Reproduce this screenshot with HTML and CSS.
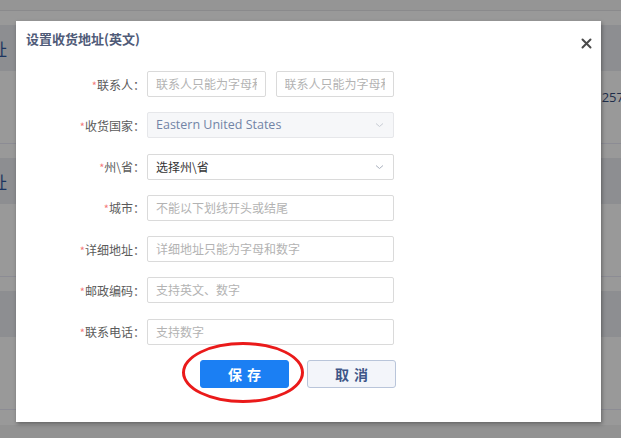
FILE: index.html
```html
<!DOCTYPE html>
<html lang="zh">
<head>
<meta charset="utf-8">
<link rel="stylesheet" href="styles.css">
</head>
<body>
<div class="page">
  <div class="topbar"></div>
  <div class="group">
    <div class="gap"></div>
    <div class="ghead"><span class="cut">址</span></div>
    <div class="grow"><span class="num">257</span></div>
  </div>
  <div class="group">
    <div class="gap"></div>
    <div class="ghead"><span class="cut">址</span></div>
    <div class="grow"></div>
  </div>
  <div class="group">
    <div class="gap"></div>
    <div class="ghead"></div>
    <div class="grow"></div>
  </div>
  <div class="foot"></div>
</div>

<div class="modal">
  <div class="mhead">
    <span class="mtitle">设置收货地址(英文)</span>
    <svg class="close" width="11" height="11" viewBox="0 0 11 11"><path d="M1.5 1.5L9.5 9.5M9.5 1.5L1.5 9.5" stroke="#4a4a4a" stroke-width="2" stroke-linecap="round"/></svg>
  </div>
  <div class="form">
    <label class="lbl"><i>*</i>联系人：</label>
    <div class="pair">
      <div class="inp ph"><span class="txt">联系人只能为字母和</span></div>
      <div class="inp ph"><span class="txt">联系人只能为字母和</span></div>
    </div>

    <label class="lbl"><i>*</i>收货国家：</label>
    <div class="inp sel disabled"><span>Eastern United States</span><svg class="chev" width="9" height="6" viewBox="0 0 9 6"><path d="M1 1.5L4.5 4.5L8 1.5" fill="none" stroke="#c8ccd4" stroke-width="1"/></svg></div>

    <label class="lbl"><i>*</i>州\省：</label>
    <div class="inp sel"><span>选择州\省</span><svg class="chev" width="9" height="6" viewBox="0 0 9 6"><path d="M1 1.5L4.5 4.5L8 1.5" fill="none" stroke="#a9b0bd" stroke-width="1"/></svg></div>

    <label class="lbl"><i>*</i>城市：</label>
    <div class="inp ph"><span class="txt">不能以下划线开头或结尾</span></div>

    <label class="lbl"><i>*</i>详细地址：</label>
    <div class="inp ph"><span class="txt">详细地址只能为字母和数字</span></div>

    <label class="lbl"><i>*</i>邮政编码：</label>
    <div class="inp ph"><span class="txt">支持英文、数字</span></div>

    <label class="lbl"><i>*</i>联系电话：</label>
    <div class="inp ph"><span class="txt">支持数字</span></div>
  </div>
  <div class="actions">
    <div class="savewrap">
      <button class="btn save">保存</button>
      <span class="ring"></span>
    </div>
    <button class="btn cancel">取消</button>
  </div>
</div>
</body>
</html>
```

FILE: styles.css
```css
* { box-sizing: border-box; }
html, body { margin: 0; padding: 0; }
body {
  width: 621px;
  height: 438px;
  overflow: hidden;
  background: #999999;
  font-family: "Noto Sans CJK SC", "Noto Sans", sans-serif;
  position: relative;
}
.page { display: flex; flex-direction: column; }
.topbar { height: 11px; background: #959595; border-bottom: 1px solid #8a8a8c; }
.group { display: flex; flex-direction: column; }
.gap { height: 14px; background: #999999; }
.ghead {
  height: 46px;
  background: #8d8e91;
  display: flex;
  align-items: center;
  overflow: hidden;
}
.cut {
  font-size: 17px;
  color: #1c3560;
  margin-left: -10px;
}
.grow {
  height: 73px;
  background: #999999;
  border-bottom: 1px solid #8c8c94;
  display: flex;
  align-items: center;
  justify-content: flex-end;
  padding-bottom: 20px;
}
.num {
  font-family: "Open Sans", sans-serif;
  font-size: 13px;
  color: #1f2d4a;
  margin-right: -3px;
}
.foot { height: 28px; background: linear-gradient(#999 0 15px, #929292 15px); }

.modal {
  position: absolute;
  left: 16px;
  top: 21px;
  width: 585px;
  height: 401px;
  background: #ffffff;
  box-shadow: 1px 2px 4px rgba(0,0,0,0.35);
  display: flex;
  flex-direction: column;
}
.mhead {
  height: 34px;
  padding: 0 10px;
  display: flex;
  justify-content: space-between;
  align-items: center;
}
.mtitle {
  font-size: 13px;
  font-weight: 700;
  color: #4f5b78;
}
.close { margin-top: 10px; margin-right: -1px; }

.form {
  margin-top: 16px;
  display: grid;
  grid-template-columns: 129px 247px;
  column-gap: 2px;
  row-gap: 15.3px;
  align-items: center;
}
.lbl {
  text-align: right;
  font-size: 12px;
  color: #5a5a5a;
  white-space: nowrap;
}
.lbl i {
  font-style: normal;
  color: #f47a7a;
  font-size: 11px;
}
.pair { display: flex; gap: 10px; }
.pair .inp { flex: 1; min-width: 0; }
.inp {
  height: 26px;
  border: 1px solid #dadada;
  border-radius: 2px;
  background: #fff;
  padding: 0 8px;
  font-size: 12px;
  line-height: 24px;
  white-space: nowrap;
  overflow: hidden;
}
.txt { display: block; overflow: hidden; white-space: nowrap; }
.ph { color: #b3b3b3; }
.sel {
  display: flex;
  align-items: center;
  justify-content: space-between;
  color: #333;
}
.chev { flex: none; margin-right: 1px; }
.disabled {
  background: #f6f7f9;
  border-color: #e6e7ea;
}
.disabled span {
  font-family: "Open Sans", sans-serif;
  font-size: 12.5px;
  color: #7284a6;
}

.actions {
  margin-top: 15px;
  padding-left: 184px;
  display: flex;
  gap: 18px;
}
.savewrap { position: relative; display: flex; }
.btn {
  width: 89px;
  height: 28px;
  border-radius: 3px;
  font-family: "Noto Sans CJK SC", sans-serif;
  font-size: 14px;
  font-weight: 700;
  letter-spacing: 5px;
  padding: 0 0 0 5px;
  cursor: pointer;
}
.save {
  background: #1b7ff3;
  border: 1px solid #1b7ff3;
  color: #ffffff;
}
.cancel {
  background: #f3f5fa;
  border: 1px solid #b9c5da;
  color: #3e5688;
}
.ring {
  position: absolute;
  left: -18px;
  top: -18px;
  width: 122px;
  height: 61px;
  border: 3px solid #ea1a1a;
  border-radius: 50%;
  pointer-events: none;
}
```
